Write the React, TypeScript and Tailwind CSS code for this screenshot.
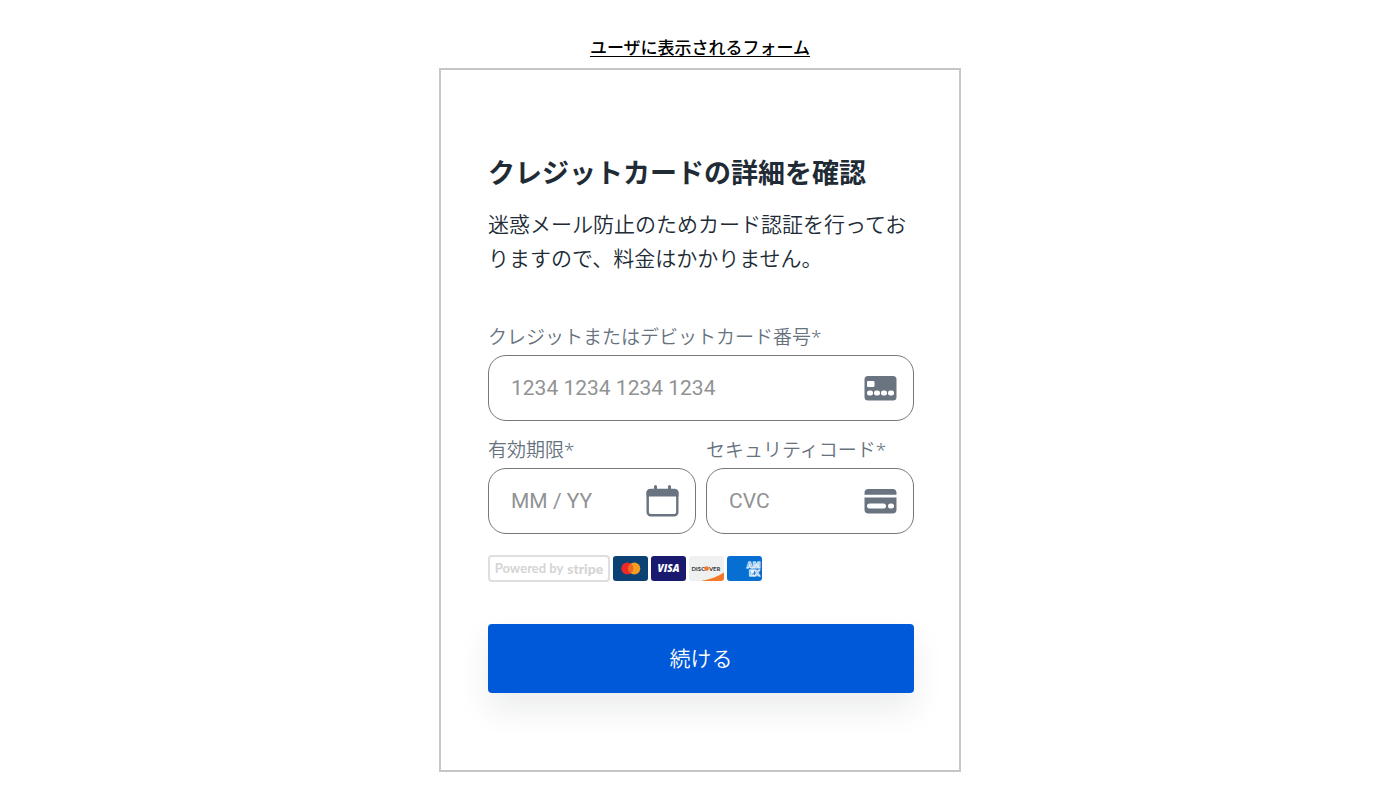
import React from "react";

interface CardFieldProps {
  id: string;
  label: string;
  placeholder: string;
  autoComplete: string;
  children: React.ReactNode;
}

const CardField: React.FC<CardFieldProps> = ({
  id,
  label,
  placeholder,
  autoComplete,
  children,
}) => {
  return (
    <div className="min-w-0 flex-1">
      <label
        htmlFor={id}
        className="mb-1 block text-[19px] font-[350] leading-7 text-[#66727e]"
      >
        {label}
      </label>
      <div className="flex h-[66px] items-center gap-2 rounded-[18px] border border-[#777] pl-[22px] pr-4">
        <input
          id={id}
          type="text"
          autoComplete={autoComplete}
          placeholder={placeholder}
          className="h-full w-full min-w-0 flex-1 bg-transparent font-['Roboto','Noto_Sans_CJK_JP',sans-serif] text-[21px] text-[#212b36] outline-none placeholder:text-[#909294]"
        />
        {children}
      </div>
    </div>
  );
};

const CardNumberIcon = () => (
  <svg className="h-[34px] w-[33px] shrink-0" viewBox="0 0 33 34" aria-hidden="true">
    <rect x="0.5" y="5" width="32" height="24.5" rx="3.5" fill="#6a7380" />
    <rect x="3" y="10" width="7.5" height="6" rx="1" fill="#fff" />
    <g fill="#fff">
      <rect x="3" y="19.5" width="6" height="5" rx="2.3" />
      <rect x="10" y="19.5" width="6" height="5" rx="2.3" />
      <rect x="17" y="19.5" width="6" height="5" rx="2.3" />
      <rect x="24" y="19.5" width="6" height="5" rx="2.3" />
    </g>
  </svg>
);

const CalendarIcon = () => (
  <svg className="h-[34px] w-[33px] shrink-0" viewBox="0 0 33 34" aria-hidden="true">
    <rect x="1.7" y="6" width="29.6" height="25.3" rx="3" fill="#fff" stroke="#6a7380" strokeWidth="2.4" />
    <path d="M0.5 12.5V9a4 4 0 0 1 4-4h24a4 4 0 0 1 4 4v3.5z" fill="#6a7380" />
    <path d="M9.5 2.5v4M23.5 2.5v4" stroke="#6a7380" strokeWidth="3" strokeLinecap="round" />
  </svg>
);

const CvcIcon = () => (
  <svg className="h-[34px] w-[33px] shrink-0" viewBox="0 0 33 34" aria-hidden="true">
    <path d="M0.5 10.7V9a4 4 0 0 1 4-4h24a4 4 0 0 1 4 4v1.7z" fill="#6a7380" />
    <path d="M0.5 13.5h32v12a4 4 0 0 1-4 4h-24a4 4 0 0 1-4-4z" fill="#6a7380" />
    <rect x="3" y="19.5" width="19" height="5" rx="2.5" fill="#fff" />
    <rect x="24" y="19.5" width="6" height="5" rx="2.5" fill="#fff" />
  </svg>
);

const Mastercard = () => (
  <svg className="h-[25px] w-[35px]" viewBox="0 0 35 25" role="img" aria-label="Mastercard">
    <rect width="35" height="25" rx="3" fill="#0b4174" />
    <circle cx="14.3" cy="12.5" r="6" fill="#eb2a28" />
    <circle cx="21.3" cy="12.5" r="6" fill="#f59e22" />
    <path d="M17.8 7.6a6 6 0 0 1 0 9.8a6 6 0 0 1 0-9.8z" fill="#f16522" />
  </svg>
);

const Visa = () => (
  <svg className="h-[25px] w-[35px]" viewBox="0 0 35 25" role="img" aria-label="Visa">
    <rect width="35" height="25" rx="3" fill="#191970" />
    <text x="17.5" y="16" textAnchor="middle" fill="#fff" fontFamily="Open Sans, sans-serif" fontSize="10" fontWeight="800" fontStyle="italic">
      VISA
    </text>
  </svg>
);

const Discover = () => (
  <svg className="h-[25px] w-[35px]" viewBox="0 0 35 25" role="img" aria-label="Discover">
    <rect width="35" height="25" rx="3" fill="#eff1f0" />
    <path d="M12 25C21 23.5 29 20.5 35 16.5V22a3 3 0 0 1-3 3z" fill="#f4772a" />
    <g fill="#333" fontFamily="Lato, sans-serif" fontSize="6" fontWeight="700">
      <text x="2.5" y="14.7">DISC</text>
      <text x="19.9" y="14.7">VER</text>
    </g>
    <circle cx="17.6" cy="12.6" r="2.3" fill="#f4772a" />
  </svg>
);

const Amex = () => (
  <svg className="h-[25px] w-[35px]" viewBox="0 0 35 25" role="img" aria-label="American Express">
    <rect width="35" height="25" rx="3" fill="#066fd1" />
    <g fill="#066fd1" stroke="#fff" strokeWidth="0.8" fontFamily="Inter, sans-serif" fontSize="8" fontWeight="800">
      <text x="19.5" y="12">AM</text>
      <text x="22" y="19.5">EX</text>
    </g>
  </svg>
);

const App: React.FC = () => {
  const handleSubmit = (e: React.FormEvent) => {
    e.preventDefault();
  };

  return (
    <main className="min-h-screen bg-white px-4 pb-7 pt-[34px] font-['Noto_Sans','Noto_Sans_CJK_JP',sans-serif]">
      <p className="mb-1.5 text-center text-[17px] font-medium leading-7 text-black underline underline-offset-2">
        ユーザに表示されるフォーム
      </p>
      <section className="mx-auto w-full max-w-[522px] border-2 border-[#c6c6c6] pb-[77px] pl-[47px] pr-[45px] pt-[83px]">
        <h1 className="text-[27px] font-bold leading-10 text-[#212b36]">
          クレジットカードの詳細を確認
        </h1>
        <p className="mt-3.5 break-all text-[21px] font-[350] leading-[34px] text-[#212b36]">
          迷惑メール防止のためカード認証を行っておりますので、料金はかかりません。
        </p>
        <form className="mt-12" onSubmit={handleSubmit}>
          <div className="flex flex-col gap-[15px]">
            <CardField
              id="card-number"
              label="クレジットまたはデビットカード番号*"
              placeholder="1234 1234 1234 1234"
              autoComplete="cc-number"
            >
              <CardNumberIcon />
            </CardField>
            <div className="flex gap-[10px]">
              <CardField
                id="card-expiry"
                label="有効期限*"
                placeholder="MM / YY"
                autoComplete="cc-exp"
              >
                <CalendarIcon />
              </CardField>
              <CardField
                id="card-cvc"
                label="セキュリティコード*"
                placeholder="CVC"
                autoComplete="cc-csc"
              >
                <CvcIcon />
              </CardField>
            </div>
          </div>
          <div className="mt-[21px] flex flex-wrap items-center gap-[3px]">
            <div className="flex h-[27px] w-[122px] items-center justify-center gap-1 whitespace-nowrap rounded-[4px] border-2 border-[#dedede] font-['Lato',sans-serif] text-[13px] font-bold leading-none text-[#d4d4d4]">
              <span>Powered by</span>
              <span className="text-[14px] font-black">stripe</span>
            </div>
            <Mastercard />
            <Visa />
            <Discover />
            <Amex />
          </div>
          <button
            type="submit"
            className="mt-[42px] h-[69px] w-full cursor-pointer rounded-[4px] bg-[#0059d9] text-[21px] font-[350] text-white shadow-[0_16px_32px_rgba(33,43,54,0.09)]"
          >
            続ける
          </button>
        </form>
      </section>
    </main>
  );
};

export default App;
